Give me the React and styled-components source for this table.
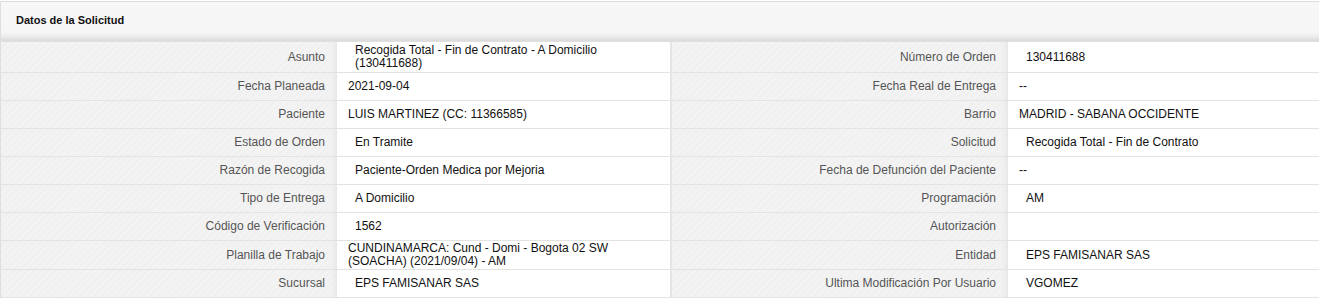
import React from "react";
import styled, { createGlobalStyle } from "styled-components";

const Global = createGlobalStyle`
  html, body { margin: 0; padding: 0; background: #fff; }
  body { font-family: "Liberation Sans", Arial, sans-serif; }
`;

const Page = styled.div`
  padding-top: 1px;
  width: 1319px;
`;

const Panel = styled.section`
  border-left: 1px solid #dedede;
`;

const Header = styled.div`
  height: 41px;
  border-top: 1px solid #dcdcdc;
  background: linear-gradient(
    to bottom,
    #f7f7f7 0%,
    #f6f6f6 76%,
    #ececec 86%,
    #dcdcdc 96%,
    #e2e2e2 100%
  );
  display: flex;
  align-items: center;
  padding: 0 15px 4px;
  box-sizing: border-box;
`;

const Title = styled.h3`
  margin: 0;
  font-size: 11px;
  font-weight: bold;
  color: #111;
`;

const Table = styled.div`
  display: grid;
  grid-template-columns: 336px 335px 336px 1fr;
`;

const Row = styled.div`
  display: contents;
`;

const Cell = styled.div`
  height: ${(p) => p.$h}px;
  box-sizing: border-box;
  border-bottom: 1px solid #e3e3e3;
  display: flex;
  align-items: center;
  font-size: 12px;
  line-height: 13px;
`;

const Label = styled(Cell)`
  justify-content: flex-end;
  text-align: right;
  padding: 0 12px 0 10px;
  color: #555;
  background:
    linear-gradient(to right, rgba(0,0,0,0) 0, rgba(0,0,0,0) calc(100% - 7px), #ececec calc(100% - 2px), #e6e6e6 100%),
    repeating-linear-gradient(135deg, #f3f3f3 0, #f3f3f3 3px, #f0f0f0 3px, #f0f0f0 5px);
`;

const Value = styled(Cell)`
  padding: 0 10px 0 ${(p) => (p.$indent ? 18 : 11)}px;
  color: #111;
  background: #fff;
  border-right: ${(p) => (p.$divider ? "2px solid #e6e6e6" : "0")};
`;

const rows = [
  { h: 31, l1: "Asunto", v1: "Recogida Total - Fin de Contrato - A Domicilio (130411688)", i1: true, l2: "Número de Orden", v2: "130411688", i2: true },
  { h: 28, l1: "Fecha Planeada", v1: "2021-09-04", l2: "Fecha Real de Entrega", v2: "--" },
  { h: 28, l1: "Paciente", v1: "LUIS MARTINEZ (CC: 11366585)", l2: "Barrio", v2: "MADRID - SABANA OCCIDENTE" },
  { h: 28, l1: "Estado de Orden", v1: "En Tramite", i1: true, l2: "Solicitud", v2: "Recogida Total - Fin de Contrato", i2: true },
  { h: 28, l1: "Razón de Recogida", v1: "Paciente-Orden Medica por Mejoria", i1: true, l2: "Fecha de Defunción del Paciente", v2: "--" },
  { h: 28, l1: "Tipo de Entrega", v1: "A Domicilio", i1: true, l2: "Programación", v2: "AM", i2: true },
  { h: 28, l1: "Código de Verificación", v1: "1562", i1: true, l2: "Autorización", v2: "" },
  { h: 29, l1: "Planilla de Trabajo", v1: "CUNDINAMARCA: Cund - Domi - Bogota 02 SW (SOACHA) (2021/09/04) - AM", l2: "Entidad", v2: "EPS FAMISANAR SAS", i2: true },
  { h: 28, l1: "Sucursal", v1: "EPS FAMISANAR SAS", i1: true, l2: "Ultima Modificación Por Usuario", v2: "VGOMEZ", i2: true },
];

export default function App() {
  return (
    <Page>
      <Global />
      <Panel>
        <Header>
          <Title>Datos de la Solicitud</Title>
        </Header>
        <Table>
          {rows.map((r) => (
            <Row key={r.l1}>
              <Label $h={r.h}>{r.l1}</Label>
              <Value $h={r.h} $indent={r.i1} $divider>{r.v1}</Value>
              <Label $h={r.h}>{r.l2}</Label>
              <Value $h={r.h} $indent={r.i2}>{r.v2}</Value>
            </Row>
          ))}
        </Table>
      </Panel>
    </Page>
  );
}
